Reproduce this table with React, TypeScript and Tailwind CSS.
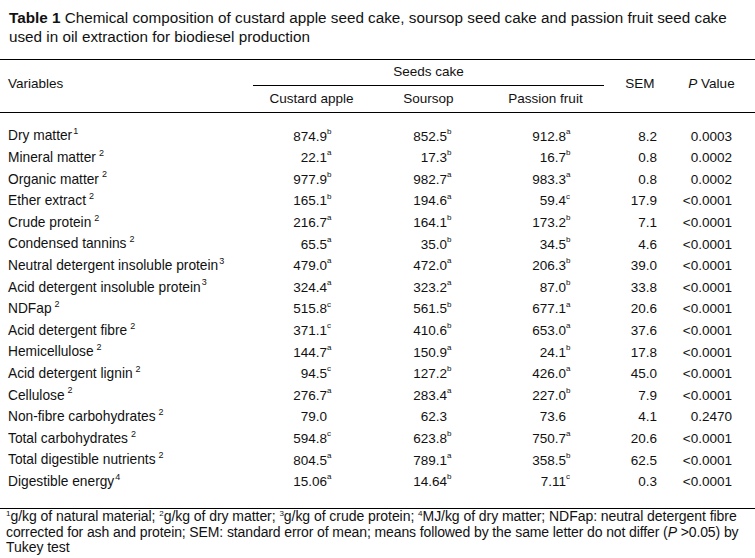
type Cell = [string, string];

type Row = {
  name: string;
  note: string;
  gap: boolean;
  custard: Cell;
  soursop: Cell;
  passion: Cell;
  sem: string;
  p: string;
};

const rows: Row[] = [
  { name: 'Dry matter', note: '1', gap: false, custard: ['874.9', 'b'], soursop: ['852.5', 'b'], passion: ['912.8', 'a'], sem: '8.2', p: '0.0003' },
  { name: 'Mineral matter', note: '2', gap: true, custard: ['22.1', 'a'], soursop: ['17.3', 'b'], passion: ['16.7', 'b'], sem: '0.8', p: '0.0002' },
  { name: 'Organic matter', note: '2', gap: true, custard: ['977.9', 'b'], soursop: ['982.7', 'a'], passion: ['983.3', 'a'], sem: '0.8', p: '0.0002' },
  { name: 'Ether extract', note: '2', gap: true, custard: ['165.1', 'b'], soursop: ['194.6', 'a'], passion: ['59.4', 'c'], sem: '17.9', p: '<0.0001' },
  { name: 'Crude protein', note: '2', gap: true, custard: ['216.7', 'a'], soursop: ['164.1', 'b'], passion: ['173.2', 'b'], sem: '7.1', p: '<0.0001' },
  { name: 'Condensed tannins', note: '2', gap: true, custard: ['65.5', 'a'], soursop: ['35.0', 'b'], passion: ['34.5', 'b'], sem: '4.6', p: '<0.0001' },
  { name: 'Neutral detergent insoluble protein', note: '3', gap: false, custard: ['479.0', 'a'], soursop: ['472.0', 'a'], passion: ['206.3', 'b'], sem: '39.0', p: '<0.0001' },
  { name: 'Acid detergent insoluble protein', note: '3', gap: false, custard: ['324.4', 'a'], soursop: ['323.2', 'a'], passion: ['87.0', 'b'], sem: '33.8', p: '<0.0001' },
  { name: 'NDFap', note: '2', gap: true, custard: ['515.8', 'c'], soursop: ['561.5', 'b'], passion: ['677.1', 'a'], sem: '20.6', p: '<0.0001' },
  { name: 'Acid detergent fibre', note: '2', gap: true, custard: ['371.1', 'c'], soursop: ['410.6', 'b'], passion: ['653.0', 'a'], sem: '37.6', p: '<0.0001' },
  { name: 'Hemicellulose', note: '2', gap: true, custard: ['144.7', 'a'], soursop: ['150.9', 'a'], passion: ['24.1', 'b'], sem: '17.8', p: '<0.0001' },
  { name: 'Acid detergent lignin', note: '2', gap: true, custard: ['94.5', 'c'], soursop: ['127.2', 'b'], passion: ['426.0', 'a'], sem: '45.0', p: '<0.0001' },
  { name: 'Cellulose', note: '2', gap: true, custard: ['276.7', 'a'], soursop: ['283.4', 'a'], passion: ['227.0', 'b'], sem: '7.9', p: '<0.0001' },
  { name: 'Non-fibre carbohydrates', note: '2', gap: true, custard: ['79.0', ''], soursop: ['62.3', ''], passion: ['73.6', ''], sem: '4.1', p: '0.2470' },
  { name: 'Total carbohydrates', note: '2', gap: true, custard: ['594.8', 'c'], soursop: ['623.8', 'b'], passion: ['750.7', 'a'], sem: '20.6', p: '<0.0001' },
  { name: 'Total digestible nutrients', note: '2', gap: true, custard: ['804.5', 'a'], soursop: ['789.1', 'a'], passion: ['358.5', 'b'], sem: '62.5', p: '<0.0001' },
  { name: 'Digestible energy', note: '4', gap: false, custard: ['15.06', 'a'], soursop: ['14.64', 'b'], passion: ['7.11', 'c'], sem: '0.3', p: '<0.0001' },
];

const cols = 'grid grid-cols-[253px_117px_117px_117px_72px_79px]';

function Value({ cell, pad }: { cell: Cell; pad: string }) {
  return (
    <div className={`flex items-center justify-end ${pad}`}>
      <span>{cell[0]}</span>
      <span className="inline-block w-[6px] text-[8px] leading-none relative -top-[5px] text-left">{cell[1]}</span>
    </div>
  );
}

export default function App() {
  return (
    <div className="w-[755px] h-[558px] bg-white text-[#111] font-['Liberation_Sans',Arial,sans-serif] overflow-hidden">
      {/* caption */}
      <div className="pt-[8px] pl-[9px] text-[15.25px] leading-[19px] whitespace-nowrap">
        <span className="font-bold">Table 1</span> Chemical composition of custard apple seed cake, soursop seed cake and passion fruit seed cake
        <br />
        used in oil extraction for biodiesel production
      </div>

      {/* header */}
      <div className={`${cols} mt-[13px] border-t border-b border-black text-[13.5px]`}>
        <div className="row-span-2 flex items-center pl-[8px] pb-[3px]">Variables</div>
        <div className="col-span-3 h-[26px] flex items-center justify-center border-b border-black">Seeds cake</div>
        <div className="row-span-2 flex items-center justify-center pb-[3px]">SEM</div>
        <div className="row-span-2 flex items-center justify-center pr-[8px] pb-[3px]">
          <span className="italic">P</span>&nbsp;Value
        </div>
        <div className="h-[26px] flex items-center justify-center">Custard apple</div>
        <div className="h-[26px] flex items-center justify-center">Soursop</div>
        <div className="h-[26px] flex items-center justify-center">Passion fruit</div>
      </div>

      {/* body */}
      <div className="pt-[13px] pb-[15px] border-b border-black text-[13.5px]">
        {rows.map((r) => (
          <div key={r.name} className={`${cols} h-[21.6px]`}>
            <div className="flex items-center pl-[8px] whitespace-nowrap">
              <span className="text-[13.75px]">{r.name}</span>
              <span className={`text-[9px] leading-none relative -top-[5px] ${r.gap ? 'ml-[3px]' : 'ml-[1px]'}`}>{r.note}</span>
            </div>
            <Value cell={r.custard} pad="pr-[37px]" />
            <Value cell={r.soursop} pad="pr-[34px]" />
            <Value cell={r.passion} pad="pr-[32px]" />
            <div className="flex items-center justify-end pr-[19px]">{r.sem}</div>
            <div className="flex items-center justify-end pr-[23px]">{r.p}</div>
          </div>
        ))}
      </div>

      {/* footnote */}
      <div className="pl-[6px] text-[14px] leading-[15.5px] tracking-[-0.05px] whitespace-nowrap">
        <div>
          <span className="text-[8px] leading-none relative -top-[5px]">1</span>g/kg of natural material;{' '}
          <span className="text-[8px] leading-none relative -top-[5px]">2</span>g/kg of dry matter;{' '}
          <span className="text-[8px] leading-none relative -top-[5px]">3</span>g/kg of crude protein;{' '}
          <span className="text-[8px] leading-none relative -top-[5px]">4</span>MJ/kg of dry matter; NDFap: neutral detergent fibre
        </div>
        <div className="tracking-[-0.11px]">
          corrected for ash and protein; SEM: standard error of mean; means followed by the same letter do not differ (<span className="italic">P</span>&nbsp;&gt;0.05) by
        </div>
        <div>Tukey test</div>
      </div>
    </div>
  );
}
